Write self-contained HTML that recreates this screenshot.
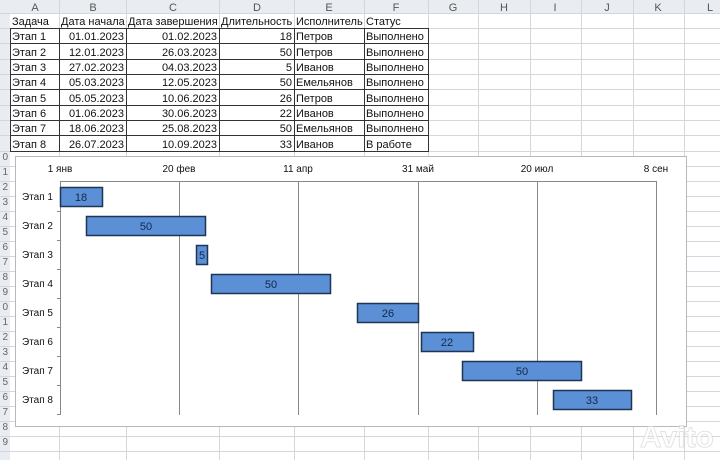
<!DOCTYPE html>
<html><head><meta charset="utf-8"><style>
body{margin:0;width:720px;height:460px;overflow:hidden;background:#fff;font-family:"Liberation Sans",sans-serif;}
svg text{font-family:"Liberation Sans",sans-serif;}
</style></head><body>
<svg width="720" height="460" xmlns="http://www.w3.org/2000/svg">
<rect width="720" height="460" fill="#fff"/>
<!-- header bar -->
<rect x="0" y="0" width="720" height="13" fill="#e9edf2"/>
<rect x="0" y="0" width="10" height="460" fill="#e9edf2"/>
<g stroke="#d4d8de" stroke-width="1">
<line x1="59.5" y1="0" x2="59.5" y2="460"/><line x1="126.5" y1="0" x2="126.5" y2="460"/>
<line x1="219.5" y1="0" x2="219.5" y2="460"/><line x1="294.5" y1="0" x2="294.5" y2="460"/>
<line x1="364.5" y1="0" x2="364.5" y2="460"/><line x1="428.5" y1="0" x2="428.5" y2="460"/>
<line x1="478.5" y1="0" x2="478.5" y2="460"/><line x1="530.5" y1="0" x2="530.5" y2="460"/>
<line x1="581.5" y1="0" x2="581.5" y2="460"/><line x1="633.5" y1="0" x2="633.5" y2="460"/>
<line x1="684.5" y1="0" x2="684.5" y2="460"/>
</g>
<g stroke="#d4d8de">
<line x1="0" y1="13.5" x2="720" y2="13.5"/><line x1="0" y1="28.5" x2="720" y2="28.5"/>
<line x1="0" y1="43.5" x2="720" y2="43.5"/><line x1="0" y1="59.5" x2="720" y2="59.5"/>
<line x1="0" y1="74.5" x2="720" y2="74.5"/><line x1="0" y1="89.5" x2="720" y2="89.5"/>
<line x1="0" y1="105.5" x2="720" y2="105.5"/><line x1="0" y1="120.5" x2="720" y2="120.5"/>
<line x1="0" y1="135.5" x2="720" y2="135.5"/><line x1="0" y1="151.5" x2="720" y2="151.5"/>
<line x1="0" y1="166.5" x2="720" y2="166.5"/><line x1="0" y1="181.5" x2="720" y2="181.5"/>
<line x1="0" y1="196.5" x2="720" y2="196.5"/><line x1="0" y1="211.5" x2="720" y2="211.5"/>
<line x1="0" y1="226.5" x2="720" y2="226.5"/><line x1="0" y1="241.5" x2="720" y2="241.5"/>
<line x1="0" y1="256.5" x2="720" y2="256.5"/><line x1="0" y1="271.5" x2="720" y2="271.5"/>
<line x1="0" y1="286.5" x2="720" y2="286.5"/><line x1="0" y1="301.5" x2="720" y2="301.5"/>
<line x1="0" y1="316.5" x2="720" y2="316.5"/><line x1="0" y1="331.5" x2="720" y2="331.5"/>
<line x1="0" y1="346.5" x2="720" y2="346.5"/><line x1="0" y1="361.5" x2="720" y2="361.5"/>
<line x1="0" y1="376.5" x2="720" y2="376.5"/><line x1="0" y1="391.5" x2="720" y2="391.5"/>
<line x1="0" y1="406.5" x2="720" y2="406.5"/><line x1="0" y1="421.5" x2="720" y2="421.5"/>
<line x1="0" y1="436.5" x2="720" y2="436.5"/><line x1="0" y1="451.5" x2="720" y2="451.5"/>
</g>
<g font-size="11" fill="#555" text-anchor="middle">
<text x="35" y="11">A</text><text x="93" y="11">B</text><text x="173" y="11">C</text><text x="257" y="11">D</text><text x="329" y="11">E</text><text x="396" y="11">F</text><text x="453" y="11">G</text><text x="504" y="11">H</text><text x="555" y="11">I</text><text x="607" y="11">J</text><text x="658" y="11">K</text><text x="710" y="11">L</text>
</g>
<!-- table borders -->
<g stroke="#333" stroke-width="1">
<rect x="10.5" y="28.5" width="418" height="123" fill="none"/>
<line x1="59.5" y1="28" x2="59.5" y2="152"/><line x1="126.5" y1="28" x2="126.5" y2="152"/>
<line x1="219.5" y1="28" x2="219.5" y2="152"/><line x1="294.5" y1="28" x2="294.5" y2="152"/>
<line x1="364.5" y1="28" x2="364.5" y2="152"/>
<line x1="10" y1="43.5" x2="429" y2="43.5"/><line x1="10" y1="59.5" x2="429" y2="59.5"/>
<line x1="10" y1="74.5" x2="429" y2="74.5"/><line x1="10" y1="89.5" x2="429" y2="89.5"/>
<line x1="10" y1="105.5" x2="429" y2="105.5"/><line x1="10" y1="120.5" x2="429" y2="120.5"/>
<line x1="10" y1="135.5" x2="429" y2="135.5"/>
</g>
<g font-size="11" fill="#111">
<text x="12" y="25">Задача</text><text x="61" y="25">Дата начала</text><text x="128" y="25">Дата завершения</text><text x="221" y="25">Длительность</text><text x="296" y="25">Исполнитель</text><text x="366" y="25">Статус</text>
<text x="12" y="40">Этап 1</text><text x="12" y="56">Этап 2</text><text x="12" y="71">Этап 3</text><text x="12" y="86">Этап 4</text><text x="12" y="102">Этап 5</text><text x="12" y="117">Этап 6</text><text x="12" y="132">Этап 7</text><text x="12" y="148">Этап 8</text>
<text x="296" y="40">Петров</text><text x="296" y="56">Петров</text><text x="296" y="71">Иванов</text><text x="296" y="86">Емельянов</text><text x="296" y="102">Петров</text><text x="296" y="117">Иванов</text><text x="296" y="132">Емельянов</text><text x="296" y="148">Иванов</text>
<text x="366" y="40">Выполнено</text><text x="366" y="56">Выполнено</text><text x="366" y="71">Выполнено</text><text x="366" y="86">Выполнено</text><text x="366" y="102">Выполнено</text><text x="366" y="117">Выполнено</text><text x="366" y="132">Выполнено</text><text x="366" y="148">В работе</text>
</g>
<g font-size="11" fill="#111" text-anchor="end">
<text x="124" y="40">01.01.2023</text><text x="124" y="56">12.01.2023</text><text x="124" y="71">27.02.2023</text><text x="124" y="86">05.03.2023</text><text x="124" y="102">05.05.2023</text><text x="124" y="117">01.06.2023</text><text x="124" y="132">18.06.2023</text><text x="124" y="148">26.07.2023</text>
<text x="217" y="40">01.02.2023</text><text x="217" y="56">26.03.2023</text><text x="217" y="71">04.03.2023</text><text x="217" y="86">12.05.2023</text><text x="217" y="102">10.06.2023</text><text x="217" y="117">30.06.2023</text><text x="217" y="132">25.08.2023</text><text x="217" y="148">10.09.2023</text>
<text x="292" y="40">18</text><text x="292" y="56">50</text><text x="292" y="71">5</text><text x="292" y="86">50</text><text x="292" y="102">26</text><text x="292" y="117">22</text><text x="292" y="132">50</text><text x="292" y="148">33</text>
</g>
<g font-size="10" fill="#666" text-anchor="end">
<text x="8" y="160">0</text><text x="8" y="175">1</text><text x="8" y="190">2</text><text x="8" y="205">3</text><text x="8" y="220">4</text><text x="8" y="235">5</text><text x="8" y="250">6</text><text x="8" y="265">7</text><text x="8" y="280">8</text><text x="8" y="295">9</text><text x="8" y="310">0</text><text x="8" y="325">1</text><text x="8" y="340">2</text><text x="8" y="355">3</text><text x="8" y="370">4</text><text x="8" y="385">5</text><text x="8" y="400">6</text><text x="8" y="415">7</text><text x="8" y="430">8</text><text x="8" y="445">9</text>
</g>
<!-- chart -->
<rect x="15.5" y="156.5" width="671" height="270" fill="#fff" stroke="#b8b8b8"/>
<g stroke="#888" stroke-width="1">
<line x1="60.5" y1="181.5" x2="656" y2="181.5"/>
<line x1="60.5" y1="181" x2="60.5" y2="415"/>
<line x1="179.5" y1="181" x2="179.5" y2="415"/><line x1="298.5" y1="181" x2="298.5" y2="415"/>
<line x1="418.5" y1="181" x2="418.5" y2="415"/><line x1="537.5" y1="181" x2="537.5" y2="415"/>
<line x1="656.5" y1="181" x2="656.5" y2="415"/>
<line x1="57" y1="211.5" x2="60" y2="211.5"/><line x1="57" y1="240.5" x2="60" y2="240.5"/><line x1="57" y1="269.5" x2="60" y2="269.5"/><line x1="57" y1="298.5" x2="60" y2="298.5"/><line x1="57" y1="327.5" x2="60" y2="327.5"/><line x1="57" y1="356.5" x2="60" y2="356.5"/><line x1="57" y1="385.5" x2="60" y2="385.5"/><line x1="57" y1="414.5" x2="60" y2="414.5"/>
</g>
<g font-size="10" fill="#111" text-anchor="middle">
<text x="60" y="172">1 янв</text><text x="179" y="172">20 фев</text><text x="298" y="172">11 апр</text><text x="418" y="172">31 май</text><text x="537" y="172">20 июл</text><text x="656" y="172">8 сен</text>
</g>
<g font-size="10" fill="#111">
<text x="22" y="200">Этап 1</text><text x="22" y="229">Этап 2</text><text x="22" y="258">Этап 3</text><text x="22" y="287">Этап 4</text><text x="22" y="316">Этап 5</text><text x="22" y="345">Этап 6</text><text x="22" y="374">Этап 7</text><text x="22" y="403">Этап 8</text>
</g>
<g fill="#5b8fd6" stroke="#1f3556" stroke-width="1.5">
<rect x="60.5" y="187.5" width="42" height="19"/>
<rect x="86.5" y="216.5" width="119" height="19"/>
<rect x="196.5" y="245.5" width="11" height="19"/>
<rect x="211.5" y="274.5" width="119" height="19"/>
<rect x="357.5" y="303.5" width="61" height="19"/>
<rect x="421.5" y="332.5" width="52" height="19"/>
<rect x="462.5" y="361.5" width="119" height="19"/>
<rect x="553.5" y="390.5" width="78" height="19"/>
</g>
<g font-size="11" fill="#14284a" text-anchor="middle">
<text x="81" y="201">18</text><text x="146" y="230">50</text><text x="202" y="259">5</text><text x="271" y="288">50</text><text x="388" y="317">26</text><text x="447" y="346">22</text><text x="522" y="375">50</text><text x="592" y="404">33</text>
</g>
<text x="640" y="447" font-size="30" font-weight="bold" fill="#fff" stroke="#ddd" stroke-width="1" opacity="0.8">Avito</text>
</svg>
</body></html>
